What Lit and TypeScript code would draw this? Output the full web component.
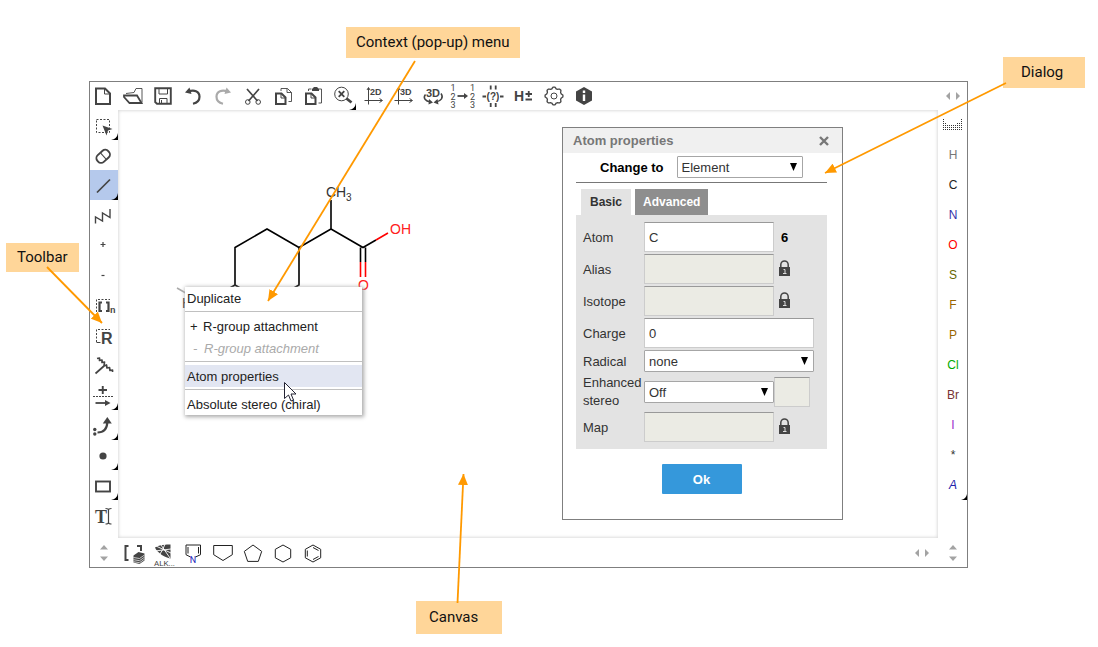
import { LitElement, html, svg, css, nothing, type SVGTemplateResult } from "lit";
import { customElement, property, state } from "lit/decorators.js";
import { classMap } from "lit/directives/class-map.js";

type Art = SVGTemplateResult;
interface Tool { label: string; art: Art; more?: boolean; active?: boolean; dim?: boolean }

const page = svg`<path d="M8 7.500h9l5 5v10.500H8z" stroke-width="2"/><path d="M16.500 7.500v5.500h5.500"/>`;
const sheets = svg`<path d="M8 12.500h5.500l4 4v6.500H8z" stroke-width="2"/><path d="M13 12.500v4.500h4.500"/>`;
const axes = (t: string) => svg`<path d="M10.500 23.500V7M6.500 19.500h17.500M9 9l1.500-2.500L12 9M21.500 17.500l3 2-3 2"/>
  <text x="12" y="13.500" class="b" font-size="9">${t}</text>`;
const numbers = (x: number) => svg`<text x=${x} y="10" font-size="9" text-anchor="middle">1</text>
  <text x=${x} y="18.500" font-size="9" text-anchor="middle">2</text><text x=${x} y="27" font-size="9" text-anchor="middle">3</text>`;
const gear = Array.from({ length: 64 }, (_, i) => {
  const a = (i / 64) * Math.PI * 2;
  const r = 8.2 + 0.9 * Math.max(-0.8, Math.min(0.8, 1.5 * Math.cos(a * 8)));
  return `${(16 + r * Math.cos(a)).toFixed(2)},${(15 + r * Math.sin(a)).toFixed(2)}`;
}).join(" ");

const topTools: Tool[] = [
  { label: "New", art: page },
  { label: "Open", art: svg`<path d="M6 14.500h13l4.500 7.500H11.500L6 16z" stroke-width="1.800"/><path d="M8 12.500l8-1 2-4h6v14" stroke-width=".9"/>` },
  { label: "Save", art: svg`<path d="M7.200 7.200h15.600v15.600H9L7.200 21z" stroke-width="1.900"/><path d="M11 7.500v5.500h8.500V7.500M11.500 22.500v-5h7.500v5M13.500 19v3"/>` },
  { label: "Undo", art: svg`<path d="M10 10.800c6-2.500 11.500-.5 11.500 5 0 4-3 6.200-6.500 7" stroke-width="2.200"/><path class="f" d="M7 11.500l4.500-5 2 6.500z"/>` },
  { label: "Redo", dim: true, art: svg`<path d="M20 10.800c-6-2.500-11.500-.5-11.500 5 0 4 3 6.200 6.500 7" stroke-width="2.200"/><path class="f" d="M23 11.500l-4.500-5-2 6.500z"/>` },
  { label: "Cut", art: svg`<path d="M9 8l10.500 12M21 8L10.500 20" stroke-width="1.700"/><circle cx="9.800" cy="21" r="2.300"/><circle cx="20.200" cy="21" r="2.300"/>` },
  { label: "Copy", art: svg`${sheets}<path d="M13 10V7.500h6.500l4 4v9h-3M19 7.500v4h4.500" stroke-width=".9"/>` },
  { label: "Paste", art: svg`${sheets}<path d="M10.500 10V8h3m7 0h3v14h-3" stroke-width=".9"/><path class="f" d="M14 8l2-2h3l2 2v2h-7z"/>` },
  { label: "Zoom", more: true, art: svg`<circle cx="13.500" cy="13" r="6.800"/><path d="M10.700 10.200l5.600 5.600m0-5.600l-5.600 5.600" stroke-width="1.800"/><path d="M18.500 17.500l5 4" stroke-width="2.800"/>` },
  { label: "Clean 2D", art: axes("2D") },
  { label: "Clean 3D", art: axes("3D") },
  { label: "3D viewer", art: svg`<text x="8" y="16" class="b" font-size="11">3D</text><path d="M7.500 13.500c-3 3.500 0 6.500 5 7.500M23 12.500c3 4 0 7.500-5 8.500" stroke-width="1.500"/><path class="f" d="M11 18l4 3.500-4.500 2zM19.500 18l-4 3.500 5 2z"/>` },
  { label: "Map atoms", art: svg`${numbers(5)}${numbers(24.5)}<path d="M9.500 15h8" stroke-width="1.800"/><path class="f" d="M16 12l4 3-4 3z"/>` },
  { label: "Check structure", art: svg`<path d="M4.500 15.500h3.500M22 15.500h3.500M12.700 4.500v4m5-4v4M12.700 22v4m5-4v4" stroke-width="1.800"/><text x="15" y="18.500" class="b" font-size="10" text-anchor="middle">(?)</text>` },
  { label: "Explicit hydrogens", art: svg`<text x="6" y="20" class="b" font-size="14">H</text><path d="M17.500 13h6.500M20.750 10v6M17.500 18.500h6.500" stroke-width="1.800"/>` },
  { label: "Settings", art: svg`<polygon points=${gear} stroke-width="1.300"/><circle cx="16" cy="15" r="3"/>` },
  { label: "About", art: svg`<path class="f" d="M16 6l8 4.500v9L16 24l-8-4.500v-9z"/><path d="M16 9.500v2.500M16 13.500v6.500" stroke="#fff" stroke-width="2.400"/>` },
];

const marquee = svg`<path d="M8.500 22V9.500H22" stroke-dasharray="2 1.500"/>`;
const leftTools: Tool[] = [
  { label: "Select", more: true, art: svg`<rect x="8.500" y="9.500" width="13" height="13" stroke-dasharray="2 1.500"/><path class="f" stroke="#fff" stroke-width=".6" d="M14.500 15.500l10 3.500-4.500 1.500-1.500 5z"/>` },
  { label: "Erase", art: svg`<g transform="rotate(-42 15 16.500)"><rect x="8" y="12" width="14.500" height="9" rx="4" stroke-width="1.900"/><path d="M15.500 12.500v8"/></g>` },
  { label: "Single bond", more: true, active: true, art: svg`<path d="M9 22.500L22 9.500" stroke-width="1.700"/>` },
  { label: "Chain", art: svg`<path d="M7.500 23.500V17l7 4V13l7.500 4.500V9" stroke-width="1.400"/>` },
  { label: "Increase charge", art: svg`<path d="M12.500 14.500h5M15 12v5" stroke-width="1.200"/>` },
  { label: "Decrease charge", art: svg`<path d="M13.500 15.500h3" stroke-width="1.200"/>` },
  { label: "Group", art: svg`${marquee}<path d="M14 12.500h-2.500v8.500H14M18 12.500h2.500v8.500H18" stroke-width="2.200"/><text x="22" y="23" class="b" font-size="9">n</text>` },
  { label: "R-group", art: svg`${marquee}<path d="M8.500 22.500h4"/><text x="13" y="23.500" class="b" font-size="16">R</text>` },
  { label: "Multicenter", art: svg`<path d="M7.500 23.500l8.500-7.500M9 8.500l2.500-.5v2.500l2.500-.5v2.500l2.500-.5-.5 4 2.500-1 .5 3 2.500-.5.500 3 2.500-.5v2" stroke-width="1.700" stroke-linejoin="round"/>` },
  { label: "Reaction", more: true, art: svg`<path d="M10.500 10h8.500M14.750 6v8" stroke-width="1.900"/><path d="M5 16.500h20" stroke-dasharray="2 1"/><path d="M7.500 23h11" stroke-width="1.800"/><path class="f" d="M17 20l5.500 3-5.500 3z"/>` },
  { label: "Electron flow", more: true, art: svg`<circle class="f" cx="6.800" cy="19.500" r="1.700"/><circle class="f" cx="6.800" cy="24" r="1.700"/><path d="M9.500 22.500c7 0 9.500-4 9.800-10" stroke-width="2.200"/><path class="f" d="M19.300 7l4.500 6.500h-9z"/>` },
  { label: "Radical", more: true, art: svg`<circle class="f" cx="15" cy="16" r="3.600"/>` },
  { label: "Rectangle", more: true, art: svg`<rect x="8" y="11.500" width="14" height="10" stroke-width="1.900"/>` },
  { label: "Text", art: svg`<text x="7" y="22.500" class="t" font-size="18">T</text><path d="M17.500 8.500q3 0 3 1.500v12.500q0 1.500-3 1.500m6-15.500q-3 0-3 1.500m0 12.500q0 1.500 3 1.500" stroke-width="1.200"/>` },
];

const bottomTools: Tool[] = [
  { label: "Template library", art: svg`<path d="M10.500 8H7.500v14h3M19 8h4v5" stroke-width="2"/><path class="f" d="M15.500 17.500l5-3.500 6 1.500v7l-5 3.500-6-1.500z"/><path d="M15.500 19.500l6 1 5-3.500M15.500 21.700l6 1 5-3.500M15.500 23.700l6 1 5-3.500" stroke="#fff" stroke-width=".7"/>` },
  { label: "ALK...", art: svg`<path class="f" d="M7 9.500c5-3 11-3 15.500-3v14c-5-1-13-5-15.500-11z"/><path stroke="#fff" stroke-width=".9" d="M7 13l16-2M13 7l9 13M17 6q-2 6-5 10M8 8l15 7"/><text x="6" y="28" font-size="8">ALK...</text>` },
  { label: "Pyrrole", art: svg`<path class="k" d="M12.500 19L8 16.700V7h14.500v9.700L17.500 19M10 9v6.500M20.500 9v6.500"/><text x="15" y="25" font-size="9" text-anchor="middle" class="n">N</text>` },
  { label: "Cyclopentane, flat", art: svg`<path class="k" d="M5.700 7.500h18.600v9.200L15 22.500l-9.300-5.800z"/>` },
  { label: "Cyclopentane", art: svg`<path class="k" d="M15 7l8.700 6.400-3.400 10H9.700l-3.400-10z"/>` },
  { label: "Cyclohexane", art: svg`<path class="k" d="M15 7l7.700 4.300v8.500L15 24l-7.700-4.200v-8.500z"/>` },
  { label: "Benzene", art: svg`<path class="k" d="M15 7l7.700 4.300v8.500L15 24l-7.700-4.200v-8.500zM9.300 12.500v6M15 9.500l5.500 3M15 21.500l5.500-3"/>` },
];

const atoms: [string, string][] = [["H", "h"], ["C", "c"], ["N", "nn"], ["O", "o"], ["S", "s"], ["F", "fp"], ["P", "fp"],
  ["Cl", "cl"], ["Br", "br"], ["I", "i"], ["*", "star"], ["A", "any"]];
const tableColumns = [6, 4, 3, 3, 3, 3, 3, 4, 4, 6];

@customElement("tool-button")
class ToolButton extends LitElement {
  @property({ attribute: false }) tool!: Tool;
  static styles = css`
    :host { display: block; flex: none; }
    button { display: flex; position: relative; box-sizing: border-box; width: 100%; height: 100%; padding: 0 var(--tool-end, 0) 0 0; border: 0; background: none; align-items: center; justify-content: center; }
    button.active { background: #b5c9ec; }
    svg { display: block; flex: none; width: 30px; height: 30px; margin: 0 -2px; fill: none; stroke: #444; overflow: visible; }
    .dim svg { stroke: #aaa; } .dim .f { fill: #aaa; }
    .f { fill: #444; stroke: none; }
    text { fill: #444; stroke: none; font-family: Roboto, sans-serif; }
    .b { font-family: "Liberation Sans", sans-serif; font-weight: 700; }
    .t { font-family: "Liberation Serif", serif; font-weight: 700; }
    .n { fill: #2222bb; }
    .k { stroke: #222; stroke-width: 1; }
    .more { position: absolute; right: 0; bottom: 0; width: 7px; height: 7px; margin: 0; stroke: none; fill: #000; }
  `;
  render() {
    const t = this.tool;
    return html`<button class=${classMap({ active: !!t.active, dim: !!t.dim })} title=${t.label} aria-label=${t.label}>
      <svg viewBox="0 0 30 30">${t.art}</svg>
      ${t.more ? html`<svg class="more" viewBox="0 0 7 7"><path d="M7 0v7H0Q6 6 7 0"/></svg>` : nothing}
    </button>`;
  }
}

@customElement("atom-dialog")
class AtomDialog extends LitElement {
  @state() tab = "Basic";
  static styles = css`
    :host { display: block; box-sizing: border-box; border: 1px solid #7f7f7f; background: #fff; font: 13px/18px "Liberation Sans", Arial, sans-serif; color: #333; }
    * { box-sizing: border-box; }
    header { display: flex; justify-content: space-between; align-items: center; height: 25px; padding: 0 10px; background: #f0f0f0; color: #777; }
    h2 { margin: 0; font-size: 13px; }
    button { border: 0; font: bold 13px/18px "Liberation Sans", Arial, sans-serif; }
    .close { display: grid; width: 16px; height: 16px; padding: 0; place-items: center; background: none; }
    .close svg { width: 10px; height: 10px; stroke: #777; stroke-width: 2.4; }
    .body { padding: 3px 15px 25px 13px; }
    .change { display: flex; align-items: center; gap: 13px; padding: 0 24px 4px; border-bottom: 1px solid #777; color: #000; font-weight: 700; }
    .change .pick { flex: 1; }
    .pick { position: relative; display: block; }
    .pick::after { content: ""; position: absolute; right: 6px; top: 7px; width: 7px; height: 8px; background: #000; clip-path: polygon(0 0, 100% 0, 50% 100%); pointer-events: none; }
    label, b { padding-top: 1px; }
    select, input { display: block; width: 100%; margin: 0; padding: 1px 4px 0; font: 13px/18px "Liberation Sans", Arial, sans-serif; color: #333; background: #fff; border-radius: 0; opacity: 1; }
    select { height: 22px; appearance: none; border: 1px solid #a6a6a6; border-radius: 1px; }
    input { height: 30px; border: 1px solid #ccc; border-top-color: #999; }
    input:disabled { background: #ebebe4; }
    .tabs { display: flex; gap: 4px; padding: 6px 5px 0; }
    .tabs button { height: 26px; padding: 0 8px; background: #8e8e8e; color: #fff; font-size: 12px; }
    .tabs button[aria-selected="true"] { padding: 0 9px; background: #e3e3e3; color: #333; }
    form { display: grid; gap: 2px; padding: 7px 13px 7px 7px; background: #e3e3e3; }
    .row { display: grid; grid-template-columns: 61px 1fr; align-items: center; min-height: 22px; }
    .tall label { padding-top: 0; }
    .short { display: grid; grid-template-columns: 130px 36px; align-items: center; }
    .short svg { width: 11px; height: 16px; margin: 0 0 2px 5px; }
    .short b { padding-left: 7px; color: #000; }
    footer { display: flex; justify-content: center; padding-top: 15px; }
    .ok { width: 80px; height: 30px; padding: 1px 0 0; background: #3598db; color: #fff; border-radius: 1px; }
  `;
  private lock = html`<svg viewBox="0 0 11 16" aria-hidden="true"><path d="M1.800 8V4.800a3.700 3.900 0 0 1 7.400 0V8" fill="none" stroke="#444" stroke-width="1.500"/><path d="M0 7h11v9H0z" fill="#444"/><path d="M4.500 9.500h1.500v4M4 13.500h3.500" fill="none" stroke="#ddd"/></svg>`;
  private locked(id: string) {
    return html`<div class="row"><label for=${id.toLowerCase()}>${id}</label><div class="short"><input id=${id.toLowerCase()} disabled>${this.lock}</div></div>`;
  }
  render() {
    return html`
      <header><h2>Atom properties</h2><button class="close" aria-label="Close"><svg viewBox="0 0 10 10"><path d="M1 1l8 8M9 1L1 9"/></svg></button></header>
      <div class="body">
        <div class="change"><label for="kind">Change to</label><span class="pick"><select id="kind"><option>Element</option></select></span></div>
        <div class="tabs" role="tablist">${["Basic", "Advanced"].map((t) => html`<button role="tab" aria-selected=${this.tab === t} @click=${() => (this.tab = t)}>${t}</button>`)}</div>
        <form>
          <div class="row"><label for="atom">Atom</label><div class="short"><input id="atom" value="C"><b>6</b></div></div>
          ${this.locked("Alias")}${this.locked("Isotope")}
          <div class="row"><label for="charge">Charge</label><input id="charge" value="0"></div>
          <div class="row"><label for="radical">Radical</label><span class="pick"><select id="radical"><option>none</option></select></span></div>
          <div class="row tall"><label for="stereo">Enhanced stereo</label><div class="short"><span class="pick"><select id="stereo"><option>Off</option></select></span><input disabled aria-label="Stereo group"></div></div>
          ${this.locked("Map")}
        </form>
        <footer><button class="ok">Ok</button></footer>
      </div>`;
  }
}

@customElement("app-root")
class AppRoot extends LitElement {
  static styles = css`
    :host { display: block; position: relative; box-sizing: border-box; min-height: 100vh; padding: 81px 130px 79px 89px; background: #fff; font: 13px/22px "Liberation Sans", Arial, sans-serif; color: #333; overflow: hidden; }
    .editor { display: grid; grid-template: 28px 1fr 29px / 28px 1fr 29px; border: 1px solid #7f7f7f; }
    .bar { display: flex; align-items: center; }
    .top, .bottom { gap: 4px; }
    .top { grid-column: 1 / 3; } .bottom { grid-column: 2; padding-left: 2px; }
    .bar tool-button { width: 26px; height: 28px; }
    .side { display: flex; flex-direction: column; }
    .side tool-button { width: 28px; height: 30px; --tool-end: 2px; }
    .fill { margin-left: auto; padding-right: 8px; }
    .canvas { position: relative; min-height: 428px; box-shadow: inset 0 0 3px 1px #ddd; }
    .mol { display: block; position: absolute; inset: 0; width: 100%; height: 100%; fill: none; stroke: #000; stroke-width: 1.600; }
    .mol text { stroke: none; fill: #333; font-size: 14px; }
    .mol .sub { font-size: 10px; } .mol .red { stroke: #f00; } .mol text.red { fill: #ff2020; stroke: none; } .mol .gray { stroke: #aaa; }
    .atom { position: relative; display: block; height: 30px; padding: 0 0 0 1px; border: 0; background: none; font: 12px/30px "Liberation Sans", Arial, sans-serif; text-align: center; }
    .table { display: block; width: 20px; height: 12px; margin: 0 auto; fill: #333; }
    .h { color: #777; } .c { color: #222; } .nn { color: #33a; } .o { color: #f00; } .s { color: #660; } .fp { color: #960; }
    .cl { color: #0a0; } .br { color: #733; } .i { color: #93c; } .star { color: #333; } .any { color: #22a; font-style: italic; }
    .corner { position: absolute; right: 0; bottom: 0; width: 6px; height: 6px; }
    .scroll { display: grid; padding: 0; border: 0; background: none; place-items: center; }
    .scroll svg { display: block; width: 16px; height: 16px; fill: #a3a3a3; }
    .menu { position: absolute; left: 67px; top: 177px; width: 177px; background: #fff; box-shadow: 1px 1px 4px 1px #aaa; }
    .menu button { display: block; width: 100%; height: 22px; padding: 1px 2px 0; border: 0; background: none; font: 13px/21px "Liberation Sans", Arial, sans-serif; color: #222; text-align: left; white-space: pre; }
    .menu button.inset { padding: 1px 5px 0; }
    .menu button:disabled { color: #aaa; font-style: italic; padding: 1px 8px 0; }
    .menu button.hover { background: #e2e6f2; }
    .menu i { display: inline-block; width: 13px; font-style: inherit; } .menu :disabled i { width: 11px; }
    hr { height: 1px; margin: 2px 0 3px; border: 0; background: #c0c0c0; }
    atom-dialog { position: absolute; left: 444px; top: 17px; width: 281px; }
    .note { position: absolute; background: #ffd699; color: #111; font: 15px/20px Roboto, "Open Sans", sans-serif; }
    .n1 { left: 346px; top: 27px; padding: 5px 10px 6px; }
    .n2 { left: 1003px; top: 57px; padding: 5px 22px 6px 18px; }
    .n3 { left: 6px; top: 243px; padding: 4px 11px 5px; }
    .n4 { left: 416px; top: 601px; padding: 6px 24px 7px 13px; }
    .arrows { position: absolute; left: 0; top: 0; width: 1098px; height: 647px; pointer-events: none; stroke: #f90; stroke-width: 1.800; fill: none; }
  `;
  private updown = html`<button class="scroll" aria-label="Scroll vertically"><svg viewBox="0 0 16 16"><path d="M4 4.500L8 0l4 4.500zM4 11.500L8 16l4-4.500z"/></svg></button>`;
  private leftright = html`<button class="scroll" aria-label="Scroll horizontally"><svg viewBox="0 0 16 16"><path d="M5 4L1 8l4 4zM11 4l4 4-4 4z"/></svg></button>`;
  private tools(list: Tool[]) { return list.map((t) => html`<tool-button .tool=${t}></tool-button>`); }
  render() {
    return html`
      <main class="editor">
        <nav class="bar top">${this.tools(topTools)}</nav>
        ${this.leftright}
        <nav class="side">${this.tools(leftTools)}</nav>
        <section class="canvas">
          <svg class="mol"><g transform="translate(-118 -110)">
            <path d="M299 285V247.500L267 229l-32 18.500V285l32 18.500zM299 247.500l32-18.500V200M331 229l32 18.500L376 240M360.500 247.500V262M365.500 247.500V262"/>
            <path class="red" d="M376 240l12-7M360.500 262v15M365.500 262v15"/><path class="gray" d="M177 288l14 8"/><path d="M235 285l-32 18.500"/>
            <text x="326" y="197">CH</text><text class="sub" x="346" y="201">3</text>
            <text class="red" x="390" y="234">OH</text><text class="red" x="358" y="290">O</text><text x="182" y="308">H</text>
          </g></svg>
          <div class="menu" role="menu">
            <button role="menuitem">Duplicate</button><hr>
            <button role="menuitem" class="inset"><i>+</i>R-group attachment</button>
            <button role="menuitem" disabled><i>-</i>R-group attachment</button><hr>
            <button role="menuitem" class="hover">Atom properties</button><hr>
            <button role="menuitem">Absolute stereo (chiral)</button>
          </div>
          <atom-dialog></atom-dialog>
        </section>
        <nav class="side">
          <button class="atom" aria-label="Periodic table"><svg class="table" viewBox="0 0 20 12" shape-rendering="crispEdges">${tableColumns.map((h, c) =>
            Array.from({ length: h }, (_, r) => svg`<rect x=${c * 2} y=${10 - r * 2} width="1" height="1"/>`))}</svg></button>
          ${atoms.map(([a, tint]) => html`<button class="atom ${tint}">${a}${a === "A" ? html`<svg class="corner" viewBox="0 0 7 7"><path d="M7 0v7H0Q6 6 7 0" fill="#000"/></svg>` : nothing}</button>`)}
        </nav>
        ${this.updown}
        <nav class="bar bottom">${this.tools(bottomTools)}<span class="fill">${this.leftright}</span></nav>
        ${this.updown}
      </main>
      <div class="note n1">Context (pop-up) menu</div>
      <div class="note n2">Dialog</div>
      <div class="note n3">Toolbar</div>
      <div class="note n4">Canvas</div>
      <svg class="arrows" viewBox="0 0 1098 647" aria-hidden="true">
        <defs><marker id="tip" viewBox="0 0 11 10" refX="11" refY="5" markerWidth="11" markerHeight="10" markerUnits="userSpaceOnUse" orient="auto"><path d="M0 0l11 5-11 5z" fill="#f90" stroke="none"/></marker></defs>
        <path d="M415 61L268 301" marker-end="url(#tip)"/><path d="M1006 83L825 173" marker-end="url(#tip)"/>
        <path d="M47 267l55 56" marker-end="url(#tip)"/><path d="M457.500 603l6-129" marker-end="url(#tip)"/>
        <path d="M284.500 382.500v16l4-3.500 2.500 6 2.500-1-2.500-6h5z" fill="#fff" stroke="#223" stroke-width="1"/>
      </svg>`;
  }
}
